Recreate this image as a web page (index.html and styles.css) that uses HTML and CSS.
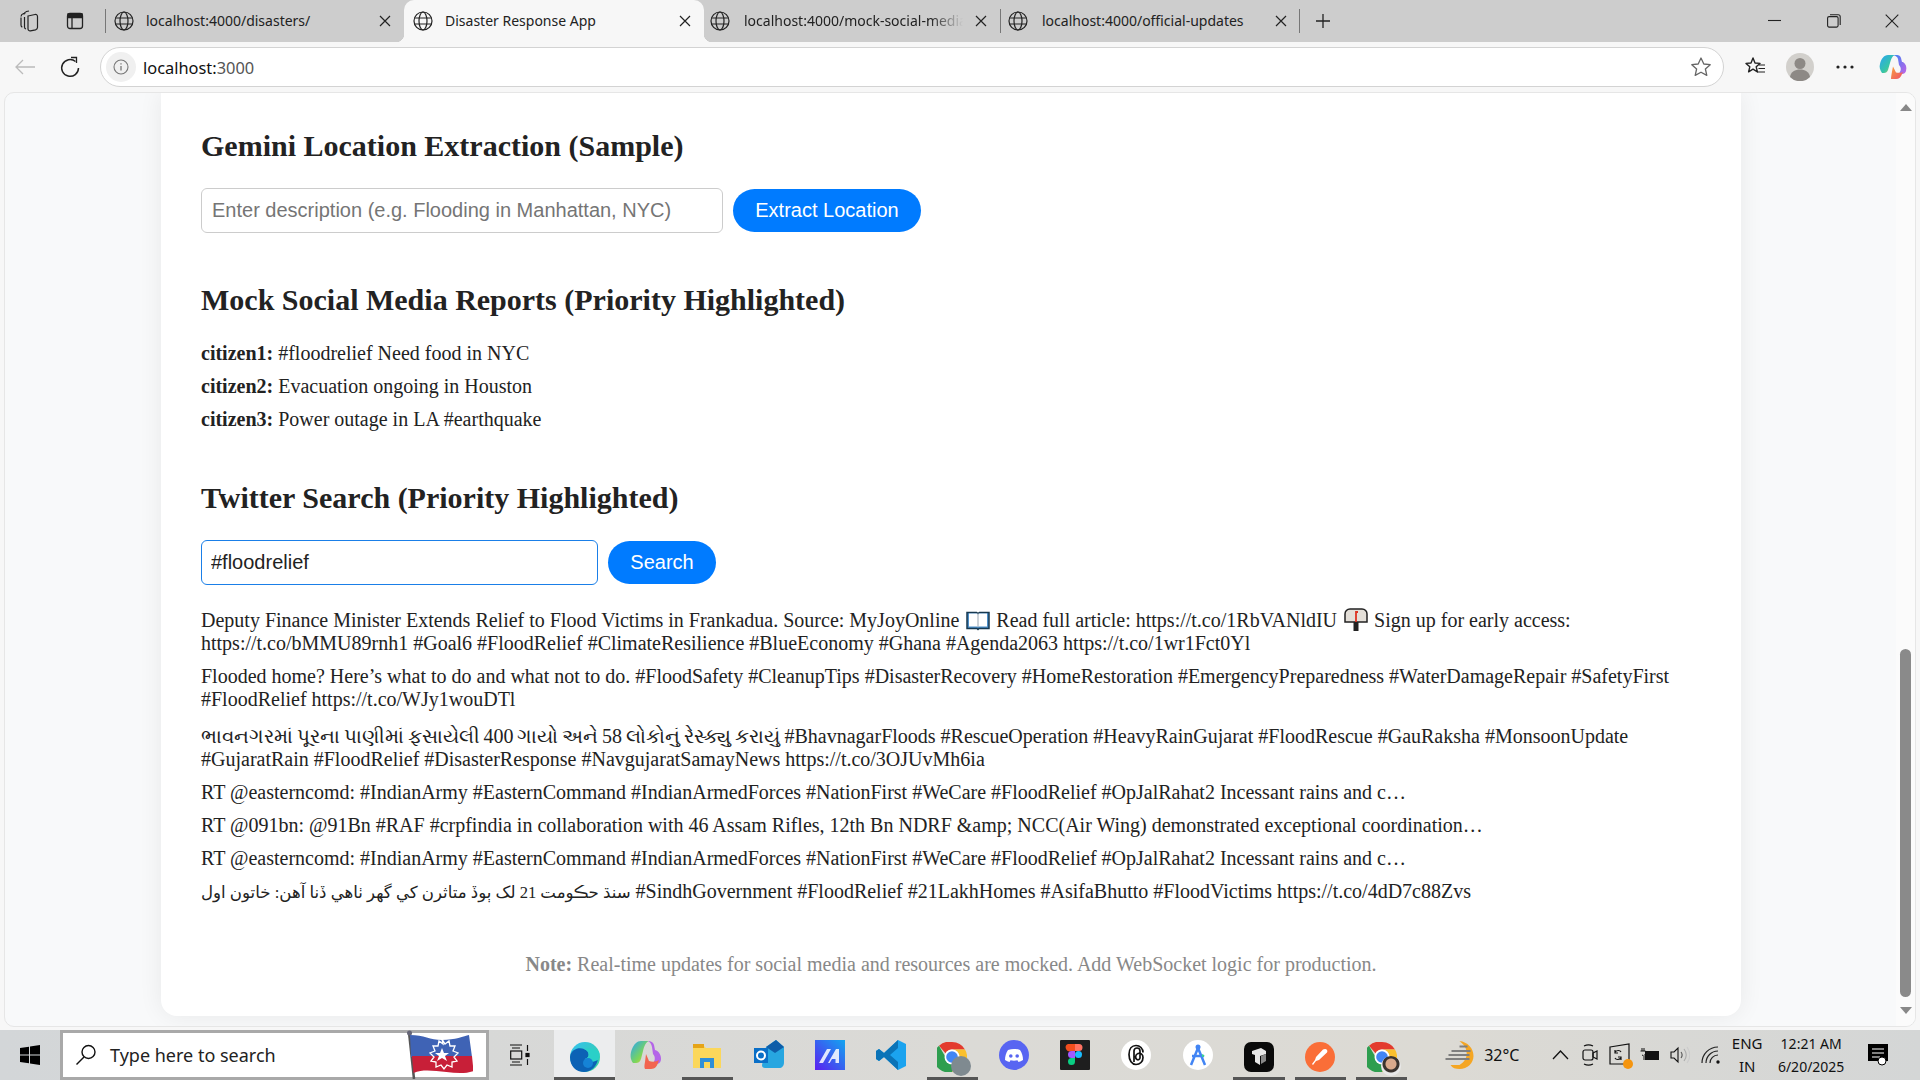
FILE: index.html
```html
<!DOCTYPE html>
<html lang="en">
<head>
    <meta charset="UTF-8">
    <title>Disaster Response App</title>
    <link rel="stylesheet" href="styles.css">
</head>
<body>
    <svg class="defs" width="0" height="0">
        <symbol id="globe" viewBox="0 0 20 20">
            <g fill="none" stroke="#222" stroke-width="1.2">
                <circle cx="10" cy="10" r="9"/>
                <ellipse cx="10" cy="10" rx="4" ry="9"/>
                <path d="M1.5 7h17M1.5 13h17"/>
            </g>
        </symbol>
        <symbol id="x" viewBox="0 0 12 12">
            <path d="M1 1l10 10M11 1L1 11" stroke="#222" stroke-width="1.2" fill="none"/>
        </symbol>
        <symbol id="chrome" viewBox="0 0 30 30">
            <path d="M15 0a15 15 0 0 1 13 7.500H15a7.500 7.500 0 0 0-6.500 3.750L2 3.800A15 15 0 0 1 15 0z" fill="#e33b2e"/>
            <path d="M28 7.500A15 15 0 0 1 15 30l6.500-11.250A7.500 7.500 0 0 0 15 7.500z" fill="#fbc02d"/>
            <path d="M15 30A15 15 0 0 1 2 3.800l6.500 11.200a7.500 7.500 0 0 0 13 3.750z" fill="#2e9e4f"/>
            <circle cx="15" cy="15" r="7.500" fill="#fff"/>
            <circle cx="15" cy="15" r="5.800" fill="#4285f4"/>
        </symbol>
    </svg>

    <!-- tab strip -->
    <div class="tabstrip">
        <div class="strip-icon">
            <svg width="22" height="22" viewBox="0 0 22 22" fill="none" stroke="#222" stroke-width="1.2"><path d="M3 6.500c0-1.500 1-2.500 2.500-3l2-.5M6 4.500c0-1.500 1-2.500 2.500-3L11 1"/><path d="M10 6l7-1.500c1.500-.3 2.500.7 2.500 2v11c0 1.200-.8 2-2 2.300l-5 1c-1.500.3-2.500-.7-2.500-2z"/><path d="M6.500 7v10c0 1 .6 1.800 1.500 2M3 7.500v7.500c0 1 .5 1.800 1.300 2.200"/></svg>
        </div>
        <div class="strip-icon">
            <svg width="18" height="18" viewBox="0 0 18 18" fill="none" stroke="#222" stroke-width="1.3"><rect x="1.500" y="1.500" width="15" height="15" rx="2.500"/><path d="M2 2h14v3.500H2z" fill="#222"/><path d="M6 5v11"/></svg>
        </div>
        <div class="tab tab-first">
            <svg class="tab-globe"><use href="#globe"/></svg>
            <span class="tab-title">localhost:4000/disasters/</span>
            <svg class="tab-close"><use href="#x"/></svg>
        </div>
        <div class="tab tab-active">
            <svg class="tab-globe"><use href="#globe"/></svg>
            <span class="tab-title">Disaster Response App</span>
            <svg class="tab-close"><use href="#x"/></svg>
        </div>
        <div class="tab tab-third">
            <svg class="tab-globe"><use href="#globe"/></svg>
            <span class="tab-title tab-fade">localhost:4000/mock-social-media</span>
            <svg class="tab-close"><use href="#x"/></svg>
        </div>
        <div class="tab tab-fourth">
            <svg class="tab-globe"><use href="#globe"/></svg>
            <span class="tab-title">localhost:4000/official-updates</span>
            <svg class="tab-close"><use href="#x"/></svg>
        </div>
        <div class="new-tab">
            <svg width="16" height="16" viewBox="0 0 16 16"><path d="M8 1v14M1 8h14" stroke="#222" stroke-width="1.3"/></svg>
        </div>
        <div class="window-btns">
            <svg width="14" height="14" viewBox="0 0 14 14"><path d="M0 6.500h13" stroke="#222" stroke-width="1.100"/></svg>
            <svg width="14" height="14" viewBox="0 0 14 14" fill="none" stroke="#222" stroke-width="1.100"><rect x=".6" y="2.600" width="10.500" height="10.500" rx="1.500"/><path d="M3 .7h8.200a2 2 0 0 1 2 2V11"/></svg>
            <svg width="14" height="14" viewBox="0 0 14 14"><path d="M.7.700l12.600 12.600M13.300.7L.7 13.300" stroke="#222" stroke-width="1.100"/></svg>
        </div>
    </div>

    <!-- address bar -->
    <div class="toolbar">
        <svg class="tool-back" width="22" height="18" viewBox="0 0 22 18" fill="none" stroke="#bbb" stroke-width="1.300"><path d="M21 9H2M9 2L2 9l7 7"/></svg>
        <svg class="tool-reload" width="22" height="22" viewBox="0 0 22 22" fill="none" stroke="#222" stroke-width="1.500"><path d="M16.500 5.500A8.400 8.400 0 1 0 19.500 12"/><path d="M12 1.500h5.500V7" stroke-width="1.300"/></svg>
        <div class="omnibox">
            <span class="site-info">
                <svg width="16" height="16" viewBox="0 0 16 16" fill="none" stroke="#777" stroke-width="1.100"><circle cx="8" cy="8" r="7"/><path d="M8 7v4.500M8 4.200v1.200" stroke-width="1.300"/></svg>
            </span>
            <span class="url"><span class="url-host">localhost:</span>3000</span>
            <svg class="omni-star" width="22" height="22" viewBox="0 0 22 22"><path d="M11 2l2.800 6 6.400.7-4.800 4.300 1.400 6.400L11 16.200l-5.800 3.200 1.400-6.400L1.800 8.700 8.200 8z" fill="none" stroke="#666" stroke-width="1.300" stroke-linejoin="round"/></svg>
        </div>
        <svg class="tool-fav" width="22" height="22" viewBox="0 0 22 22" fill="none" stroke="#222" stroke-width="1.400"><path d="M9 2l2 5 5 .4-3.800 3.400 1.200 5L9 13.200 4.600 15.800l1.200-5L2 7.400 7 7z" stroke-linejoin="round"/><path d="M15 9h6M14.500 12.500H21M13 16h8" stroke-width="1.200"/></svg>
        <svg class="tool-avatar" width="28" height="28" viewBox="0 0 28 28"><circle cx="14" cy="14" r="14" fill="#d2d0cc"/><circle cx="14" cy="10.500" r="5.500" fill="#8d8985"/><path d="M4 24c1-5.500 5-7.500 10-7.500s9 2 10 7.500a14 14 0 0 1-20 0z" fill="#8d8985"/></svg>
        <svg class="tool-more" width="18" height="4" viewBox="0 0 18 4" fill="#222"><circle cx="2" cy="2" r="1.600"/><circle cx="9" cy="2" r="1.600"/><circle cx="16" cy="2" r="1.600"/></svg>
        <svg class="tool-copilot" width="28" height="26" viewBox="0 0 28 26">
            <defs>
                <linearGradient id="cpA" x1="0" y1="0" x2="1" y2="1"><stop offset="0" stop-color="#2aa4f4"/><stop offset=".6" stop-color="#37c6a5"/><stop offset="1" stop-color="#f5c93a"/></linearGradient>
                <linearGradient id="cpB" x1="0" y1="0" x2="1" y2="1"><stop offset="0" stop-color="#3b82f6"/><stop offset="1" stop-color="#c264e6"/></linearGradient>
                <linearGradient id="cpC" x1="0" y1="0" x2="1" y2="1"><stop offset="0" stop-color="#f8a13a"/><stop offset="1" stop-color="#ef4f6c"/></linearGradient>
            </defs>
            <path d="M9 1h7c-3 1-4 4-5 8l-2 7c-.7 2-2 3-4 3H3c-2-3-3-6-2-9 1-5 4-9 8-9z" fill="url(#cpA)"/>
            <path d="M14 1h4c2 0 3.500 1 4 3l1 4h1c3 2 4 5 3 9-.5 2-2 3-4 3h-4c3-2 4-6 1-9l-1-6c-.5-2-2.500-3.500-5-4z" fill="url(#cpB)"/>
            <path d="M12 25h5c3 0 5-2 6-5l1-2c-2 1-5 1-7 .5l-3-6-1 5c-.5 3-1 6-1 7.500z" fill="url(#cpC)"/>
        </svg>
    </div>

    <!-- page -->
    <div class="viewport">
        <div class="page">
            <div class="card">
                <h2>Gemini Location Extraction (Sample)</h2>
                <div class="form-row">
                    <input class="text-input input-long" type="text" placeholder="Enter description (e.g. Flooding in Manhattan, NYC)">
                    <button class="btn btn-extract">Extract Location</button>
                </div>

                <h2 class="section-title">Mock Social Media Reports (Priority Highlighted)</h2>
                <ul class="reports">
                    <li><strong>citizen1:</strong> #floodrelief Need food in NYC</li>
                    <li><strong>citizen2:</strong> Evacuation ongoing in Houston</li>
                    <li><strong>citizen3:</strong> Power outage in LA #earthquake</li>
                </ul>

                <h2 class="section-title">Twitter Search (Priority Highlighted)</h2>
                <div class="form-row">
                    <input class="text-input input-short" type="text" value="#floodrelief">
                    <button class="btn btn-search">Search</button>
                </div>
                <ul class="tweets">
                    <li>Deputy Finance Minister Extends Relief to Flood Victims in Frankadua. Source: MyJoyOnline
                        <svg class="emoji" width="24" height="20" viewBox="0 0 24 20"><path d="M1 1.500h9.500l1.500 1 1.500-1H23v16H13l-1 1-1-1H1z" fill="#4d8fc9" stroke="#17384f" stroke-width="1.500"/><path d="M3 2.500h8.500L12 4v12l-.5-.5H3zM21 2.500h-8.500L12 4v12l.5-.5H21z" fill="#fff"/><path d="M12 3v13" stroke="#9aa6b2" stroke-width="1"/></svg>
                        Read full article: https://t.co/1RbVANldIU
                        <svg class="emoji" width="24" height="23" viewBox="0 0 24 23"><path d="M9.500 13h5v10h-5z" fill="#222"/><path d="M6 1h12c3 0 5 2.500 5 5v8H1V6c0-2.500 2-5 5-5z" fill="#e4dfd8" stroke="#222" stroke-width="1.500"/><path d="M12 14V4h2" fill="none" stroke="#d32" stroke-width="1.800"/></svg>
                        Sign up for early access:<br>https://t.co/bMMU89rnh1 #Goal6 #FloodRelief #ClimateResilience #BlueEconomy #Ghana #Agenda2063 https://t.co/1wr1Fct0Yl</li>
                    <li>Flooded home? Here’s what to do and what not to do. #FloodSafety #CleanupTips #DisasterRecovery #HomeRestoration #EmergencyPreparedness #WaterDamageRepair #SafetyFirst #FloodRelief https://t.co/WJy1wouDTl</li>
                    <li class="tweet-gu"><span class="gujarati">ભાવનગરમાં પૂરના પાણીમાં ફસાયેલી 400 ગાયો અને 58 લોકોનું રેસ્ક્યુ કરાયું</span> #BhavnagarFloods #RescueOperation #HeavyRainGujarat #FloodRescue #GauRaksha #MonsoonUpdate #GujaratRain #FloodRelief #DisasterResponse #NavgujaratSamayNews https://t.co/3OJUvMh6ia</li>
                    <li>RT @easterncomd: #IndianArmy #EasternCommand #IndianArmedForces #NationFirst #WeCare #FloodRelief #OpJalRahat2 Incessant rains and c…</li>
                    <li>RT @091bn: @91Bn #RAF #crpfindia in collaboration with 46 Assam Rifles, 12th Bn NDRF &amp;amp; NCC(Air Wing) demonstrated exceptional coordination…</li>
                    <li>RT @easterncomd: #IndianArmy #EasternCommand #IndianArmedForces #NationFirst #WeCare #FloodRelief #OpJalRahat2 Incessant rains and c…</li>
                    <li><span class="sindhi">سنڌ حڪومت 21 لک ٻوڏ متاثرن کي گھر ٺاهي ڏنا آهن: خاتون اول</span> #SindhGovernment #FloodRelief #21LakhHomes #AsifaBhutto #FloodVictims https://t.co/4dD7c88Zvs</li>
                </ul>
                <p class="note"><strong>Note:</strong> Real-time updates for social media and resources are mocked. Add WebSocket logic for production.</p>
            </div>
        </div>
        <div class="scrollbar">
            <span class="arrow-up"></span>
            <span class="thumb"></span>
            <span class="arrow-down"></span>
        </div>
    </div>

    <!-- taskbar -->
    <div class="taskbar">
        <div class="start">
            <svg width="20" height="20" viewBox="0 0 20 20" fill="#000"><path d="M0 3l9-1.300V9.500H0zM10 1.500L20 0v9.500H10zM0 10.500h9v7.800L0 17zM10 10.500h10V20l-10-1.500z"/></svg>
        </div>
        <div class="search-box">
            <svg class="search-glass" width="22" height="22" viewBox="0 0 22 22" fill="none" stroke="#111" stroke-width="1.400"><circle cx="13.500" cy="8" r="6.500"/><path d="M9 13l-7.500 7.500"/></svg>
            <span class="search-text">Type here to search</span>
            <svg class="search-flag" width="66" height="50" viewBox="0 0 66 50">
                <path d="M2 3l5 47" stroke="#555" stroke-width="2.500"/>
                <circle cx="2.500" cy="4" r="2.500" fill="#667"/>
                <path d="M3 6c14 0 20 5 32 5 13 0 22-4 27-5l3 22H4z" fill="#3f63b5"/>
                <path d="M5 27h60l1.500 15c-8 3-18 2-27 1-13-1-23-3-33 1z" fill="#c81f38"/>
                <path d="M35 10l3 5 4-3 1 5 5 0-2 5 5 2-4 4 3 4-5 1 0 5-5-2-3 4-3-4-5 2 0-5-5-1 3-4-4-4 5-2-2-5 5 0 1-5 4 3z" fill="none" stroke="#fff" stroke-width="1.300"/>
                <path d="M35 19l2 5h5l-4 3 2 5-5-3-5 3 2-5-4-3h5z" fill="#fff"/>
            </svg>
        </div>
        <div class="task-view">
            <svg width="20" height="22" viewBox="0 0 20 22" fill="none" stroke="#111" stroke-width="1.200"><path d="M0 1h12M0 21h12M2 4h8M2 18h8"/><rect x=".7" y="7" width="11" height="8"/><path d="M17.500 1v6M17.500 15v6"/><rect x="16" y="9.500" width="3" height="3" fill="#111"/></svg>
        </div>
        <div class="apps">
            <div class="app app-current">
                <svg width="32" height="32" viewBox="0 0 32 32">
                    <defs><linearGradient id="edA" x1="0" y1="0" x2="1" y2="1"><stop offset="0" stop-color="#35c1f1"/><stop offset="1" stop-color="#34d399"/></linearGradient></defs>
                    <circle cx="16" cy="16" r="15" fill="url(#edA)"/>
                    <path d="M1 16C2 8 10 6 15 8c6 2 6 9 1 10h13c-1 7-7 13-14 13C7 31 1 25 1 16z" fill="#0c62b5"/>
                    <path d="M15 8c6 2 6 9 1 10 0 3 4 5 13 1 1-2 2-6 1-8-3-3-10-5-15-3z" fill="#2ad0c8"/>
                    <circle cx="19" cy="22" r="5" fill="#1583d6"/>
                </svg>
            </div>
            <div class="app">
                <svg width="32" height="32" viewBox="0 0 32 32">
                    <defs><linearGradient id="cpD" x1="0" y1="0" x2="1" y2="1"><stop offset="0" stop-color="#2aa4f4"/><stop offset=".6" stop-color="#7bd65a"/><stop offset="1" stop-color="#f5c93a"/></linearGradient></defs>
                    <path d="M11 2h8c-3 1-5 5-6 10l-2 8c-1 3-3 4-5 4H3C0 20 0 15 2 10 4 5 7 2 11 2z" fill="url(#cpD)"/>
                    <path d="M18 2c3 0 5 1 6 4l1 5c4 1 6 5 6 9 0 3-2 5-5 5h-4c3-2 4-7 1-10l-1-7c-.5-3-2-5-4-6z" fill="#b465e8"/>
                    <path d="M15 30h6c4 0 6-3 7-6l1-3c-3 2-7 2-10 1l-3-7-1 8c-.5 3-1 5 0 7z" fill="#f2644f"/>
                </svg>
            </div>
            <div class="app app-running">
                <svg width="28" height="26" viewBox="0 0 28 26"><path d="M0 1h10l3 3h15v20H0z" fill="#fbd75b"/><path d="M0 0h11v4H0z" fill="#e6a417"/><path d="M7 14h14v10h-4v-6h-6v6H7z" fill="#2f8fd8"/></svg>
            </div>
            <div class="app">
                <svg width="30" height="30" viewBox="0 0 30 30"><path d="M12 7l10-7 8 7v15c0 4-2 6-5 6H11c-2 0-3-1-3-3z" fill="#27a6e0"/><path d="M12 7l10-7 8 7-9 6z" fill="#0f5da8"/><path d="M0 8h14v15H0z" fill="#0a6fc7"/><circle cx="7" cy="15.500" r="4" fill="none" stroke="#fff" stroke-width="2"/></svg>
            </div>
            <div class="app">
                <svg width="30" height="30" viewBox="0 0 30 30">
                    <defs><linearGradient id="wsA" x1="0" y1="1" x2="1" y2="0"><stop offset="0" stop-color="#5b1ff0"/><stop offset="1" stop-color="#12a6f0"/></linearGradient></defs>
                    <rect width="30" height="30" fill="url(#wsA)"/>
                    <path d="M4 23L12 9h4L8 23zM13 23L21 9h3v14h-3.500v-4H17l-2.300 4z" fill="#fff" opacity=".85"/>
                </svg>
            </div>
            <div class="app">
                <svg width="30" height="30" viewBox="0 0 30 30"><path d="M22 0l8 4v22l-8 4L8 17l-5 4-3-2v-8l3-2 5 4z" fill="#1ba3ef"/><path d="M22 0L8 13l-5-4-3 2v8l3 2 5-4 14 13 0-8-8-7 8-7z" fill="#0a73b7"/></svg>
            </div>
            <div class="app app-running">
                <span class="chrome-wrap">
                    <svg width="30" height="30"><use href="#chrome"/></svg>
                    <span class="chrome-badge badge-grey"></span>
                </span>
            </div>
            <div class="app">
                <svg width="30" height="30" viewBox="0 0 30 30"><circle cx="15" cy="15" r="15" fill="#5865f2"/><path d="M9 10c4-1.500 8-1.500 12 0 2 3 3 6 3 10-1.500 1-3 1.700-4.500 2l-1-1.800c-2 .6-5 .6-7 0l-1 1.800C9 21.700 7.500 21 6 20c0-4 1-7 3-10z" fill="#fff"/><circle cx="11.800" cy="16" r="1.800" fill="#5865f2"/><circle cx="18.200" cy="16" r="1.800" fill="#5865f2"/></svg>
            </div>
            <div class="app">
                <svg width="30" height="30" viewBox="0 0 30 30"><rect width="30" height="30" rx="1" fill="#1e1e1e"/><path d="M8 4h7v7H11a3.500 3.500 0 0 1-3-7z" fill="#f24e1e"/><path d="M15 4h4a3.500 3.500 0 0 1 0 7h-4z" fill="#ff7262"/><path d="M11.500 11H15v7h-3.500a3.500 3.500 0 0 1 0-7z" fill="#a259ff"/><circle cx="18.500" cy="14.500" r="3.500" fill="#1abcfe"/><path d="M11.500 18H15v3.500a3.500 3.500 0 1 1-3.500-3.500z" fill="#0acf83"/></svg>
            </div>
            <div class="app">
                <svg width="30" height="30" viewBox="0 0 30 30"><circle cx="15" cy="15" r="15" fill="#fff"/><path d="M13 22V11a3 3 0 0 1 6 0v7a2 2 0 0 1-3 1.500c-2-1-2-5 1-6 3-.5 5 1 5 4 0 4-3 7-7 7s-7-4-7-10 3-9 7-9 7 3 7 7" fill="none" stroke="#111" stroke-width="1.700"/></svg>
            </div>
            <div class="app">
                <svg width="30" height="30" viewBox="0 0 30 30"><circle cx="15" cy="15" r="15" fill="#fff"/><circle cx="15" cy="7" r="2.500" fill="#4285f4"/><path d="M15 8L8 25M15 8l7 17M9 16h12" stroke="#4285f4" stroke-width="2.500" fill="none"/><path d="M19 14l3 2-3 1z" fill="#3ddc84"/></svg>
            </div>
            <div class="app app-running">
                <svg width="30" height="30" viewBox="0 0 30 30"><rect width="30" height="30" rx="7" fill="#0a0a0a"/><path d="M8 9l9-3 5 3v3l-6 2v9l-5-3v-7l-3-1z" fill="#e8e8e8"/><path d="M17 14l5-2v7l-5 3z" fill="#888"/></svg>
            </div>
            <div class="app app-running">
                <svg width="30" height="30" viewBox="0 0 30 30"><circle cx="15" cy="15" r="15" fill="#fa6e38"/><path d="M20 7c2 0 3 2 2 3.500L14 18l-3 1-3 4-1-1 3-4 1-3 7-7.500z" fill="#fff"/></svg>
            </div>
            <div class="app app-running">
                <span class="chrome-wrap">
                    <svg width="30" height="30"><use href="#chrome"/></svg>
                    <span class="chrome-badge badge-face"></span>
                </span>
            </div>
        </div>
        <div class="weather">
            <svg width="29" height="28" viewBox="0 0 28 28"><path d="M14 0c8 1 14 7 14 15 0 7-6 13-14 13-4 0-7-1-9-4h9c5-3 8-8 7-13 0-4-3-8-7-11z" fill="#f5a623"/><path d="M16 1c5 3 7 8 6 13-1 5-4 9-9 11h-4l10-1 6-6V8z" fill="#f5a623"/><path d="M14 5.500h8M6 10h19M3 14h21M0 18h24" stroke="#7f7f7f" stroke-width="2.200"/></svg>
            <span class="weather-text">32°C</span>
        </div>
        <div class="tray">
            <svg class="tray-caret" width="17" height="10" viewBox="0 0 17 10" fill="none" stroke="#111" stroke-width="1.300"><path d="M1 9l7.500-8L16 9"/></svg>
            <svg class="tray-cam" width="16" height="22" viewBox="0 0 16 22" fill="none" stroke="#111" stroke-width="1.200"><path d="M2 2c3-1.500 6-1.500 9 0M2 20c3 1.500 6 1.500 9 0"/><rect x="1" y="6" width="10" height="10" rx="2"/><path d="M11 9l4-2v8l-4-2z"/></svg>
            <span class="tray-sync">
                <svg width="22" height="24" viewBox="0 0 22 24" fill="none" stroke="#111" stroke-width="1.200"><path d="M1 4l19-3v20H1z"/><path d="M6 9c2-2 5-2 6 0M12 15c-2 2-5 2-6 0M6 7v3h3M12 17v-3H9"/></svg>
                <span class="sync-dot"></span>
            </span>
            <svg class="tray-battery" width="20" height="14" viewBox="0 0 20 14"><path d="M3 0v3M5 0v3M1.500 3h5v3l-1.500 1.500V12M3 7L4 7.500" stroke="#111" stroke-width="1" fill="none"/><rect x="6" y="3" width="14" height="9" fill="#111"/></svg>
            <svg class="tray-sound" width="20" height="18" viewBox="0 0 20 18" fill="none" stroke="#111" stroke-width="1.100"><path d="M1 6h3l4-4v14l-4-4H1z"/><path d="M11 6c1.500 2 1.500 4 0 6" stroke="#555"/><path d="M14 3c3 4 3 8 0 12" stroke="#aaa"/><path d="M17 1c3.500 5 3.500 11 0 16" stroke="#ccc"/></svg>
            <svg class="tray-wifi" width="20" height="18" viewBox="0 0 20 18" fill="none" stroke="#222" stroke-width="1.200"><path d="M1 17A16 16 0 0 1 17 1M5 17A12 12 0 0 1 17 5M9 17a8 8 0 0 1 8-8"/><circle cx="17" cy="16" r="1.700" fill="#111" stroke="none"/></svg>
            <div class="lang"><span>ENG</span><span>IN</span></div>
            <div class="clock"><span>12:21 AM</span><span>6/20/2025</span></div>
            <svg class="tray-notes" width="20" height="22" viewBox="0 0 20 22"><path d="M0 0h20v17H0z" fill="#000"/><path d="M4 5h12M4 9h12M4 13h8" stroke="#fff" stroke-width="1.200"/><circle cx="14" cy="17" r="4" fill="#fff" stroke="#000"/></svg>
        </div>
    </div>
</body>
</html>
```

FILE: styles.css
```css
* {
    margin: 0;
    padding: 0;
    box-sizing: border-box;
}
ul, li {
    list-style: none;
}
html, body {
    height: 100%;
    overflow: hidden;
}
body {
    display: flex;
    flex-direction: column;
    background-color: #f7f7f7;
    font-family: "Liberation Serif", "Noto Sans CJK SC", "DejaVu Sans", serif;
    color: #222;
}
.defs {
    position: absolute;
}

/* tab strip */
.tabstrip {
    height: 42px;
    flex-shrink: 0;
    display: flex;
    align-items: center;
    background-color: #cdcdcd;
    font-family: "Noto Sans", sans-serif;
    font-size: 14px;
    color: #222;
}
.strip-icon {
    width: 44px;
    display: flex;
    justify-content: center;
}
.strip-icon:first-child {
    width: 52px;
    padding-left: 6px;
}
.strip-icon:nth-child(2) {
    width: 54px;
    border-right: 1px solid #777;
    height: 24px;
    align-items: center;
    padding-right: 8px;
}
.tab {
    height: 42px;
    display: flex;
    align-items: center;
    flex-shrink: 0;
    position: relative;
}
.tab-globe {
    width: 20px;
    height: 20px;
    flex-shrink: 0;
}
.tab-title {
    margin-left: 13px;
    margin-bottom: 2px;
    flex: 1;
    white-space: nowrap;
    overflow: hidden;
}
.tab-close {
    width: 12px;
    height: 12px;
    flex-shrink: 0;
    margin-right: 13px;
}
.tab-first {
    width: 298px;
    padding-left: 8px;
}
.tab-first .tab-title,
.tab-active .tab-title {
    margin-left: 12px;
}
.tab-active {
    width: 300px;
    padding-left: 9px;
    background-color: #f7f7f7;
    border-radius: 10px 10px 0 0;
}
.tab-active::before,
.tab-active::after {
    content: "";
    position: absolute;
    bottom: 0;
    width: 8px;
    height: 8px;
}
.tab-active::before {
    left: -8px;
    background: radial-gradient(circle at 0 0, #cdcdcd 8px, #f7f7f7 8.500px);
}
.tab-active::after {
    right: -8px;
    background: radial-gradient(circle at 100% 0, #cdcdcd 8px, #f7f7f7 8.500px);
}
.tab-third {
    width: 297px;
    padding-left: 6px;
    border-right: 1px solid #777;
    height: 24px;
}
.tab-fade {
    -webkit-mask-image: linear-gradient(to right, #000 85%, transparent 100%);
    mask-image: linear-gradient(to right, #000 85%, transparent 100%);
    margin-left: 14px;
    margin-right: 12px;
}
.tab-fourth {
    width: 299px;
    padding-left: 7px;
    border-right: 1px solid #777;
    height: 24px;
}
.tab-fourth .tab-title {
    margin-left: 14px;
}
.tab-fourth .tab-close {
    margin-right: 12px;
}
.new-tab {
    margin-left: 15px;
    display: flex;
}
.window-btns {
    margin-left: auto;
    width: 152px;
    padding-right: 21px;
    display: flex;
    justify-content: space-between;
}

/* address bar */
.toolbar {
    height: 50px;
    flex-shrink: 0;
    display: flex;
    align-items: center;
    background-color: #f7f7f7;
}
.tool-back {
    margin-left: 14px;
}
.tool-reload {
    margin-left: 23px;
}
.omnibox {
    margin-left: 19px;
    width: 1624px;
    height: 40px;
    border: 1px solid #d3d3d3;
    border-radius: 20px;
    background-color: #fff;
    display: flex;
    align-items: center;
    padding-left: 5px;
}
.site-info {
    width: 30px;
    height: 30px;
    border-radius: 50%;
    background-color: #f0f0f0;
    display: flex;
    align-items: center;
    justify-content: center;
}
.url {
    margin-left: 7px;
    font-family: "Noto Sans", sans-serif;
    font-size: 16.400px;
    color: #555;
}
.url-host {
    color: #111;
}
.omni-star {
    margin-left: auto;
    margin-right: 11px;
}
.tool-fav {
    margin-left: 20px;
}
.tool-avatar {
    margin-left: 20px;
}
.tool-more {
    margin-left: 22px;
}
.tool-copilot {
    margin-left: 25px;
}

/* page */
.viewport {
    flex: 1;
    min-height: 0;
    margin: 0 4px 3px;
    display: flex;
    border: 1px solid #e6e6e6;
    border-radius: 10px;
    overflow: hidden;
    background-color: #f8f9fa;
}
.page {
    flex: 1;
    min-width: 0;
    padding-left: 156px;
}
.card {
    width: 1580px;
    height: 923px;
    padding: 37px 40px 0;
    background-color: #fff;
    border-radius: 0 0 16px 16px;
    box-shadow: 0 0 24px rgba(0, 0, 0, 0.07);
}
h2 {
    font-size: 30px;
    line-height: 32px;
    font-weight: bold;
}
.section-title {
    margin-top: 51px;
}
.form-row {
    display: flex;
    align-items: center;
    gap: 10px;
    margin-top: 26px;
}
.text-input {
    height: 45px;
    padding: 0 10px;
    border: 1px solid #ccc;
    border-radius: 6px;
    font-family: "Liberation Sans", sans-serif;
    font-size: 20px;
    color: #222;
    background-color: #fff;
}
.text-input::placeholder {
    color: #757575;
}
.input-long {
    width: 522px;
}
.input-short {
    width: 397px;
    padding-left: 9px;
    border-color: #1a7fe8;
}
.btn {
    height: 43px;
    border: 0;
    border-radius: 22px;
    background-color: #007bff;
    color: #fff;
    font-family: "Liberation Sans", sans-serif;
    font-size: 20px;
}
.btn-extract {
    width: 188px;
}
.btn-search {
    width: 108px;
}
.reports {
    margin-top: 26px;
    font-size: 20px;
    line-height: 23px;
}
.reports li {
    margin-bottom: 10px;
}
.tweets {
    margin-top: 23px;
    font-size: 20px;
    line-height: 23px;
}
.tweets li {
    margin-bottom: 10px;
}
.tweets .tweet-gu {
    padding-top: 4px;
}
.gujarati {
    word-spacing: -1.150px;
}
.sindhi {
    font-size: 16.600px;
}
.emoji {
    vertical-align: -4px;
    margin: 0 1.500px;
}
.note {
    margin-top: 49px;
    text-align: center;
    font-size: 20px;
    line-height: 23px;
    color: #888;
}

/* scrollbar */
.scrollbar {
    width: 19px;
    display: flex;
    flex-direction: column;
    align-items: center;
    background-color: #fbfbfb;
    padding-top: 11px;
    padding-bottom: 12px;
}
.arrow-up {
    width: 0;
    height: 0;
    border: 6px solid transparent;
    border-top: 0;
    border-bottom: 7px solid #888;
}
.thumb {
    width: 11px;
    height: 348px;
    margin-top: auto;
    border-radius: 6px;
    background-color: #8a8a8a;
}
.arrow-down {
    width: 0;
    height: 0;
    margin-top: 10px;
    border: 6px solid transparent;
    border-bottom: 0;
    border-top: 7px solid #888;
}

/* taskbar */
.taskbar {
    height: 50px;
    flex-shrink: 0;
    display: flex;
    align-items: stretch;
    background: linear-gradient(to right, #d3d6d8, #dbdad6 50%, #dcdad4 75%, #d4d6d6);
    font-family: "Noto Sans", sans-serif;
    color: #111;
}
.start {
    width: 60px;
    display: flex;
    align-items: center;
    justify-content: center;
}
.search-box {
    width: 429px;
    display: flex;
    align-items: center;
    border: 3px solid #a9a9a9;
    background-color: #fff;
}
.search-glass {
    margin-left: 12px;
}
.search-text {
    margin-left: 13px;
    font-size: 18px;
    color: #222;
}
.search-flag {
    margin-left: auto;
    margin-right: 13px;
    margin-top: -3px;
}
.task-view {
    width: 65px;
    padding-right: 4px;
    display: flex;
    align-items: center;
    justify-content: center;
}
.apps {
    display: flex;
}
.app {
    width: 61.300px;
    display: flex;
    flex-direction: column;
    align-items: center;
    justify-content: center;
}
.app-current {
    background-color: #ecedee;
    box-shadow: inset 0 -3px 0 #555;
    padding-top: 3px;
}
.app-running {
    padding-top: 3px;
    position: relative;
}
.app-running::after {
    content: "";
    position: absolute;
    left: 5px;
    right: 5px;
    bottom: 0;
    height: 3px;
    background-color: #555;
}
.chrome-wrap {
    position: relative;
    display: flex;
}
.chrome-badge {
    position: absolute;
    right: -4px;
    bottom: -4px;
    width: 20px;
    height: 20px;
    border-radius: 50%;
}
.badge-grey {
    background-color: #7f8a90;
}
.badge-face {
    background: radial-gradient(circle at 50% 40%, #d9a98c 0 5px, #3a332f 6px 8px, #e8e8e8 9px);
}
.weather {
    width: 130px;
    display: flex;
    align-items: center;
    padding-left: 33px;
    gap: 10px;
}
.weather-text {
    font-size: 16px;
}
.tray {
    flex: 1;
    display: flex;
    align-items: center;
}
.tray-caret {
    margin-left: 10px;
}
.tray-cam {
    margin-left: 13px;
}
.tray-sync {
    position: relative;
    display: flex;
    margin-left: 11px;
}
.sync-dot {
    position: absolute;
    right: -2px;
    bottom: -2px;
    width: 10px;
    height: 10px;
    border-radius: 50%;
    background-color: #f5950f;
}
.tray-battery {
    margin-left: 8px;
}
.tray-sound {
    margin-left: 11px;
}
.tray-wifi {
    margin-left: 11px;
}
.lang,
.clock {
    display: flex;
    flex-direction: column;
    align-items: center;
    font-size: 14px;
    line-height: 23px;
}
.lang {
    width: 40px;
    margin-left: 6px;
    font-size: 15px;
}
.clock {
    width: 80px;
    margin-left: 4px;
}
.tray-notes {
    margin-left: 17px;
}
```
